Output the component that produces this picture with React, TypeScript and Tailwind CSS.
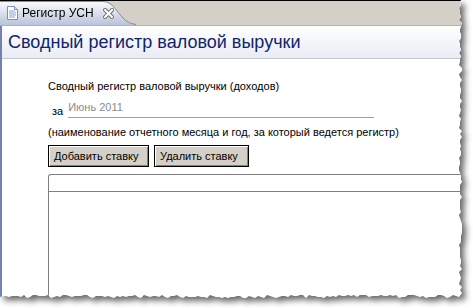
import React from 'react';

// jagged "torn paper" outline for the right and bottom edges
const tornClip = () => {
  const pts: string[] = ['0px 0px', '461px 0px'];
  let s = 7;
  const rnd = () => {
    s = (s * 9301 + 49297) % 233280;
    return s / 233280;
  };
  for (let y = 2; y < 296; y += 3) pts.push(`${459 + Math.round(rnd() * 3)}px ${y}px`);
  for (let x = 459; x > 0; x -= 3) pts.push(`${x}px ${295 + Math.round(rnd() * 3)}px`);
  pts.push('0px 297px');
  return `polygon(${pts.join(',')})`;
};

const DocIcon = () => (
  <svg width="11" height="14" viewBox="0 0 11 14">
    <path d="M0.5 0.5h7l3 3v10h-10z" fill="#fff" stroke="#7b8fb8" />
    <path d="M7.5 0.5v3h3" fill="#dfe6f4" stroke="#7b8fb8" />
    <path d="M2 5h6M2 7h7M2 9h7M2 11h6" stroke="#8aa0c8" />
  </svg>
);

const CloseIcon = () => (
  <svg width="11" height="11" viewBox="0 0 11 11">
    <path d="M2 2l7 7M9 2l-7 7" stroke="#6e6e6e" strokeWidth="4" strokeLinecap="square" />
    <path d="M2 2l7 7M9 2l-7 7" stroke="#fff" strokeWidth="2" strokeLinecap="square" />
  </svg>
);

const Btn = ({ label, w }: { label: string; w: string }) => (
  <button className={`h-[22px] ${w} border border-black bg-[#d4d0c8] px-[5px] text-left text-[11px] leading-none text-black shadow-[inset_1px_1px_0_#fff,inset_-1px_-1px_0_#808080]`}>
    {label}
  </button>
);

export default function App() {
  return (
    <div className="h-[308px] w-[473px] overflow-hidden bg-white font-['Liberation_Sans',Arial,sans-serif]">
      <div className="[filter:drop-shadow(4px_4px_3px_rgba(0,0,0,0.6))]">
        <div className="flex h-[299px] w-[462px] flex-col bg-white" style={{ clipPath: tornClip() }}>
          {/* tab bar */}
          <div className="relative h-[25px] shrink-0 border-t border-black bg-[#d4d0c8]">
            <svg className="absolute left-0 top-0" width="140" height="24" viewBox="0 0 140 24">
              <defs>
                <linearGradient id="tabg" x1="0" y1="0" x2="0" y2="1">
                  <stop offset="0" stopColor="#fbfbfd" />
                  <stop offset="1" stopColor="#b9c3dc" />
                </linearGradient>
              </defs>
              <path d="M0 0.5H104C116 0.5 120 23 136 23.5V24H0Z" fill="url(#tabg)" />
              <path d="M0 0.5H104C116 0.5 120 23 136 23.5" fill="none" stroke="#8c8c8c" />
            </svg>
            <div className="relative flex h-full items-center gap-[4px] pl-[7px]">
              <DocIcon />
              <span className="text-[12px] text-black">Регистр УСН</span>
              <span className="ml-[5px] flex"><CloseIcon /></span>
            </div>
          </div>
          <div className="h-px shrink-0 bg-[#a3b3d6]" />
          <div className="flex min-h-0 flex-1 border-l-2 border-[#7383aa]">
            <div className="flex min-w-0 flex-1 flex-col">
              {/* header */}
              <div className="flex h-[33px] shrink-0 items-center border-b border-[#c4c8d0] bg-gradient-to-b from-white to-[#e9ecf3] pl-[6px]">
                <span className="text-[18px] text-[#10246a]">Сводный регистр валовой выручки</span>
              </div>
              {/* body */}
              <div className="flex flex-1 flex-col pl-[46px] pt-[20px] text-[11px] text-black">
                <div className="leading-[14px]">Сводный регистр валовой выручки (доходов)</div>
                <div className="mt-[7px] flex items-end gap-[5px] pl-[4px]">
                  <span className="leading-[14px]">за</span>
                  <span className="w-[306px] border-b border-[#a0a0a0] pb-[3px] leading-[14px] text-[#8a8a8a]">Июнь 2011</span>
                </div>
                <div className="mt-[7px] leading-[14px]">(наименование отчетного месяца и год, за который ведется регистр)</div>
                <div className="mt-[6px] flex gap-[5px]">
                  <Btn label="Добавить ставку" w="w-[101px]" />
                  <Btn label="Удалить ставку" w="w-[95px]" />
                </div>
                <div className="mt-[7px] flex-1 rounded-tl-[3px] border-l border-t border-[#808080]">
                  <div className="h-[17px] border-b border-[#808080]" />
                </div>
              </div>
            </div>
          </div>
        </div>
      </div>
    </div>
  );
}
